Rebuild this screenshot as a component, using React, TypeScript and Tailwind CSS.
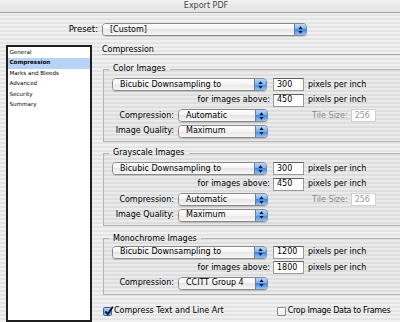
const stripes =
  "bg-[image:repeating-linear-gradient(to_bottom,#f1f1f1_0px,#f1f1f1_2px,#e4e4e4_2px,#e4e4e4_4px)]";

function Arrows() {
  return (
    <svg width="5" height="8" viewBox="0 0 5 8">
      <polygon points="2.5,0.3 4.6,3 0.4,3" fill="#111" />
      <polygon points="0.4,5 4.6,5 2.5,7.7" fill="#111" />
    </svg>
  );
}

function Popup({ label, width }: { label: string; width: string }) {
  return (
    <div
      className={`flex h-[13px] shrink-0 items-stretch overflow-hidden rounded-[4px] border border-[#8a8a8a] shadow-[0_1px_1px_rgba(0,0,0,0.15)] ${width}`}
    >
      <div className="flex flex-1 items-center whitespace-nowrap bg-[linear-gradient(to_bottom,#ffffff,#f3f3f3_50%,#e6e6e6_50%,#f7f7f7)] pl-[7px] text-[8px] leading-none text-black">
        {label}
      </div>
      <div className="flex w-[12px] items-center justify-center border-l border-[#5b7fb8] bg-[linear-gradient(to_bottom,#b9d8fb,#74aef2_50%,#3e86e4_50%,#8fc4fb)]">
        <Arrows />
      </div>
    </div>
  );
}

function Field({ value, width, dim }: { value: string; width: string; dim?: boolean }) {
  return (
    <div
      className={`flex h-[13px] shrink-0 items-center border bg-white pl-[3px] text-[8px] leading-none ${width} ${
        dim
          ? "border-[#d0d0d0] text-[#9a9a9a]"
          : "border-[#9a9a9a] border-t-[#5f5f5f] text-black"
      }`}
    >
      {value}
    </div>
  );
}

function Label({ children, width }: { children: string; width: string }) {
  return (
    <div className={`shrink-0 whitespace-nowrap text-right text-[8px] leading-none text-black ${width}`}>
      {children}
    </div>
  );
}

function ImageGroup({
  title,
  ppi,
  above,
  compression,
  quality,
  className,
  pad,
}: {
  title: string;
  ppi: string;
  above: string;
  compression: string;
  quality?: string;
  className: string;
  pad: string;
}) {
  return (
    <fieldset
      className={`w-[320px] border border-[#b3b3b3] bg-black/[0.025] px-0 ${pad} ${className}`}
    >
      <legend className="ml-[5px] px-[4px] text-[8px] leading-[10px] text-black">{title}</legend>
      <div className="flex flex-col gap-[2.5px]">
        <div className="flex items-center pl-[8px]">
          <Popup label="Bicubic Downsampling to" width="w-[155px]" />
          <div className="ml-[6px]">
            <Field value={ppi} width="w-[31px]" />
          </div>
          <span className="ml-[4px] whitespace-nowrap text-[8px] leading-none">pixels per inch</span>
        </div>
        <div className="flex items-center pl-[8px]">
          <Label width="w-[158px]">for images above:</Label>
          <div className="ml-[3px]">
            <Field value={above} width="w-[31px]" />
          </div>
          <span className="ml-[4px] whitespace-nowrap text-[8px] leading-none">pixels per inch</span>
        </div>
        <div className="flex items-center pl-[8px]">
          <Label width="w-[62px]">Compression:</Label>
          <div className="ml-[4px]">
            <Popup label={compression} width="w-[90px]" />
          </div>
          {quality && (
            <>
              <span className="ml-[44px] whitespace-nowrap text-[8px] leading-none text-[#8c8c8c]">
                Tile Size:
              </span>
              <div className="ml-[3px]">
                <Field value="256" width="w-[25px]" dim />
              </div>
            </>
          )}
        </div>
        {quality && (
          <div className="flex items-center pl-[8px]">
            <Label width="w-[62px]">Image Quality:</Label>
            <div className="ml-[4px]">
              <Popup label={quality} width="w-[90px]" />
            </div>
          </div>
        )}
      </div>
    </fieldset>
  );
}

function Check({ checked }: { checked?: boolean }) {
  return checked ? (
    <div className="relative h-[9px] w-[9px] shrink-0 rounded-[2px] border border-[#3d63a8] bg-[linear-gradient(to_bottom,#b5d6fb,#6ea8f0_50%,#3d84e3_50%,#94c6fb)]">
      <svg className="absolute -top-[2px] left-0" width="10" height="10" viewBox="0 0 10 10">
        <path d="M1.5 5.5 L3.8 8.2 L8.8 0.8" stroke="#000" strokeWidth="1.7" fill="none" />
      </svg>
    </div>
  ) : (
    <div className="h-[9px] w-[9px] shrink-0 rounded-[1px] border border-[#8c8c8c] bg-[linear-gradient(to_bottom,#ffffff,#ececec)]" />
  );
}

const sections = ["General", "Compression", "Marks and Bleeds", "Advanced", "Security", "Summary"];

export default function App() {
  return (
    <div
      className={`flex h-[322px] w-[400px] flex-col overflow-hidden font-['DejaVu_Sans',sans-serif] text-black ${stripes}`}
    >
      <div className="flex h-[13px] shrink-0 items-center justify-center border-b border-[#a2a2a2] bg-[linear-gradient(to_bottom,#f2f2f2,#e2e2e2)] pl-[12px] text-[8px] leading-none text-[#4a4a4a]">
        Export PDF
      </div>

      <div className="mt-[10px] flex shrink-0 items-center">
        <div className="w-[99px] pr-[1px] text-right text-[8.5px] leading-none">Preset:</div>
        <div className="ml-[3px]">
          <Popup label="[Custom]" width="w-[205px]" />
        </div>
      </div>

      <div className="mt-[9px] flex min-h-0 flex-1">
        <div className="ml-[6px] w-[86px] shrink-0 border-2 border-[#1e1e1e] bg-white pt-[0.5px]">
          {sections.map((s) => (
            <div
              key={s}
              className={`flex h-[10.5px] items-center whitespace-nowrap pl-[1.5px] text-[5.6px] leading-none ${
                s === "Compression" ? "bg-[#b7d3f8] font-bold" : ""
              }`}
            >
              {s}
            </div>
          ))}
        </div>

        <div className="ml-[10px] flex w-[320px] shrink-0 flex-col">
          <div className="flex h-[10px] items-center border-b border-[#a6a6a6] text-[8px] leading-none">
            Compression
          </div>
          <ImageGroup
            title="Color Images"
            ppi="300"
            above="450"
            compression="Automatic"
            quality="Maximum"
            className="ml-[1px] mt-[9px]"
            pad="pt-[4px] pb-[3px]"
          />
          <ImageGroup
            title="Grayscale Images"
            ppi="300"
            above="450"
            compression="Automatic"
            quality="Maximum"
            className="ml-[1px] mt-[6.5px]"
            pad="pt-[4px] pb-[3px]"
          />
          <ImageGroup
            title="Monochrome Images"
            ppi="1200"
            above="1800"
            compression="CCITT Group 4"
            className="ml-[1px] mt-[8px]"
            pad="pt-[2px] pb-[4px]"
          />
          <div className="ml-[1px] mt-[11.5px] flex h-[10px] items-center">
            <Check checked />
            <span className="ml-[2px] shrink-0 whitespace-nowrap text-[8px] leading-none">
              Compress Text and Line Art
            </span>
            <div className="ml-[53px] flex shrink-0 items-center">
              <Check />
              <span className="ml-[2px] whitespace-nowrap text-[8px] leading-none tracking-[-0.3px]">
                Crop Image Data to Frames
              </span>
            </div>
          </div>
        </div>
      </div>
    </div>
  );
}
